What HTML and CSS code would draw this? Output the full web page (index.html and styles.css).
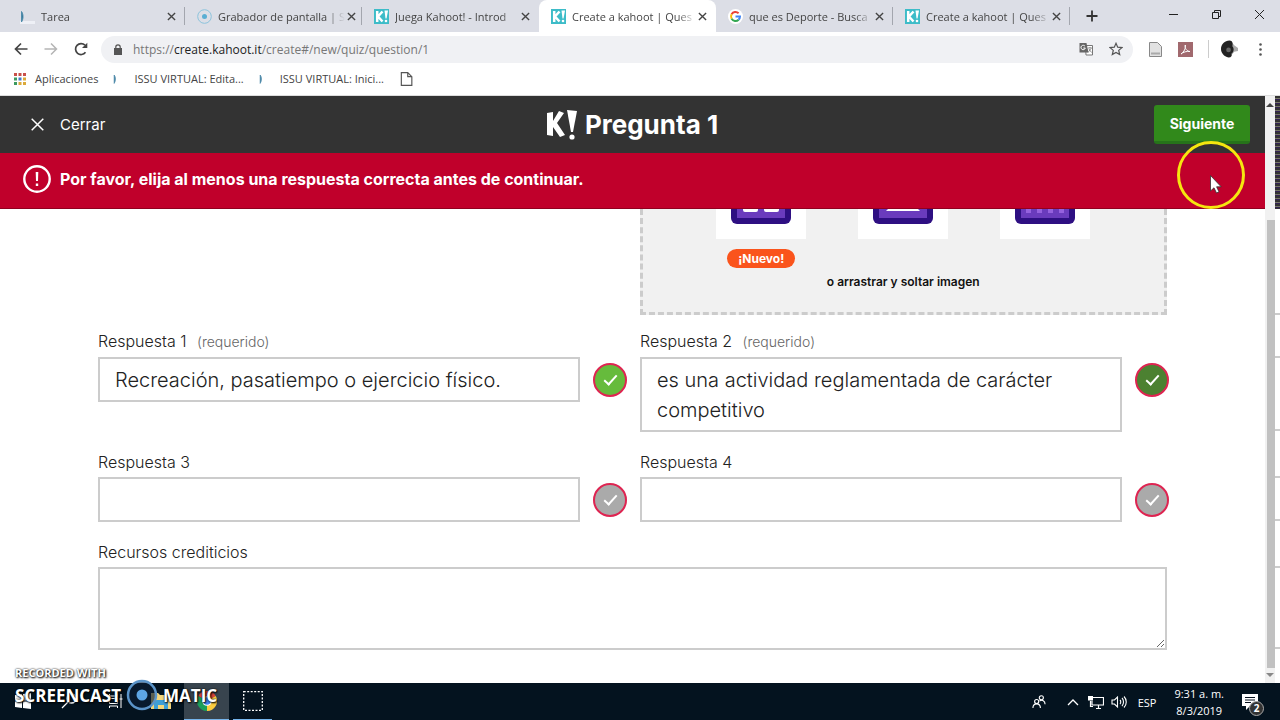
FILE: index.html
```html
<!DOCTYPE html>
<html lang="es">
<head>
<meta charset="UTF-8" />
<meta name="viewport" content="width=device-width, initial-scale=1" />
<title>Create a kahoot | Question</title>
<link rel="stylesheet" href="styles.css">
</head>
<body>

<!-- shared icons -->
<svg class="sprite" aria-hidden="true">
  <symbol id="x" viewBox="0 0 10 10"><path d="M1 1l8 8M9 1l-8 8" fill="none" stroke="currentColor" stroke-width="1.5"/></symbol>
  <symbol id="kahoot" viewBox="0 0 15 15"><path fill="#3dbcc8" d="M0 0h15v15H0z"/><path d="M3.200 2v11M8.500 2.500l-4.500 5 4.500 5" fill="none" stroke="#fff" stroke-width="2.500"/><path d="M10.500 1.500h3.500l-1.500 8h-1z" fill="#fff"/><circle cx="12" cy="12" r="1.300" fill="#fff"/></symbol>
  <symbol id="issu" viewBox="0 0 15 15"><path d="M1.500 2.500c2 2.500 2 7.500 0 10.500z" fill="#2c6f92" stroke="#4f8cab"/></symbol>
</svg>

<nav class="tabs">
  <div class="tab">
    <svg class="favicon"><use href="#issu"/></svg>
    <span class="tab-title">Tarea</span>
    <button class="tab-close" aria-label="Cerrar pestaña"><svg><use href="#x"/></svg></button>
  </div>
  <div class="tab">
    <svg class="favicon" viewBox="0 0 15 15"><circle cx="7.500" cy="7.500" r="6.800" fill="none" stroke="#8cc3dc"/><circle cx="7.500" cy="7.500" r="2.500" fill="#5aaed3"/></svg>
    <span class="tab-title">Grabador de pantalla | S</span>
    <button class="tab-close" aria-label="Cerrar pestaña"><svg><use href="#x"/></svg></button>
  </div>
  <div class="tab before-active">
    <svg class="favicon"><use href="#kahoot"/></svg>
    <span class="tab-title">Juega Kahoot! - Introd</span>
    <button class="tab-close" aria-label="Cerrar pestaña"><svg><use href="#x"/></svg></button>
  </div>
  <div class="tab active">
    <svg class="favicon"><use href="#kahoot"/></svg>
    <span class="tab-title">Create a kahoot | Ques</span>
    <button class="tab-close" aria-label="Cerrar pestaña"><svg><use href="#x"/></svg></button>
  </div>
  <div class="tab">
    <svg class="favicon" viewBox="0 0 15 15"><circle cx="7.500" cy="7.500" r="7.500" fill="#fff"/><g fill="none" stroke-width="2"><path d="M10.600 4.300A4.500 4.500 0 0 0 3.600 5.300" stroke="#ea4335"/><path d="M3.600 5.300a4.500 4.500 0 0 0 0 4.400" stroke="#fbbc05"/><path d="M3.600 9.700a4.500 4.500 0 0 0 7 1" stroke="#34a853"/><path d="M10.600 10.700A4.500 4.500 0 0 0 12 7.500H7.500" stroke="#4285f4"/></g></svg>
    <span class="tab-title">que es Deporte - Busca</span>
    <button class="tab-close" aria-label="Cerrar pestaña"><svg><use href="#x"/></svg></button>
  </div>
  <div class="tab">
    <svg class="favicon"><use href="#kahoot"/></svg>
    <span class="tab-title">Create a kahoot | Ques</span>
    <button class="tab-close" aria-label="Cerrar pestaña"><svg><use href="#x"/></svg></button>
  </div>
  <button class="new-tab" aria-label="Nueva pestaña"><svg viewBox="0 0 12 12"><path d="M6 .5v11M.5 6h11" stroke="#333" stroke-width="1.800"/></svg></button>
  <div class="window-buttons">
    <button aria-label="Minimizar"><svg viewBox="0 0 11 11"><path d="M1 5.500h9" stroke="#222"/></svg></button>
    <button aria-label="Restaurar"><svg viewBox="0 0 11 11"><path d="M1.500 3.500h6v6h-6zM3.500 3.500v-2h6v6h-2" fill="none" stroke="#222"/></svg></button>
    <button aria-label="Cerrar ventana"><svg viewBox="0 0 11 11"><path d="M1 1l9 9M10 1l-9 9" stroke="#222"/></svg></button>
  </div>
</nav>

<div class="toolbar">
  <button class="nav-btn" aria-label="Atrás"><svg viewBox="0 0 14 14"><path d="M13.500 7H1.500M7 1.500L1.500 7 7 12.500" fill="none" stroke="#444" stroke-width="1.700"/></svg></button>
  <button class="nav-btn" aria-label="Adelante"><svg viewBox="0 0 14 14"><path d="M.5 7h12M7 1.500L12.500 7 7 12.500" fill="none" stroke="#b5b5b5" stroke-width="1.500"/></svg></button>
  <button class="nav-btn" aria-label="Recargar"><svg viewBox="0 0 14 14"><path d="M11.500 10.300A5.500 5.500 0 1 1 11 3.200" fill="none" stroke="#444" stroke-width="1.700"/><path d="M13.300.7v5.300H8z" fill="#444"/></svg></button>
  <div class="address">
    <svg class="lock" viewBox="0 0 8 11"><path d="M0 4h8v7H0z" fill="#555"/><path d="M1.800 4.500V3a2.200 2.200 0 0 1 4.400 0v1.500" fill="none" stroke="#555" stroke-width="1.200"/></svg>
    <span class="url">https://<b>create.kahoot.it</b>/create#/new/quiz/question/1</span>
    <button aria-label="Traducir"><svg viewBox="0 0 14 14"><path d="M6.500 3.500h7v9.500H7z" fill="#fff" stroke="#777"/><path d="M.5 1h7l2 9.500h-9z" fill="#666"/><path d="M6 4.300a2.200 2.200 0 1 0 .3 1.700H4.300" fill="none" stroke="#fff"/><path d="M9 6h4M11 5v1M12 6.500l-3 4M10 7l2.500 3.500" stroke="#777" stroke-width=".8"/></svg></button>
    <button aria-label="Favorito"><svg viewBox="0 0 14 14"><path d="M7 1.300l1.700 3.900 4.200.4-3.200 2.800 1 4.200L7 10.400l-3.700 2.200 1-4.200L1.100 5.600l4.200-.4z" fill="none" stroke="#555" stroke-width="1.200"/></svg></button>
  </div>
  <div class="extensions">
    <svg viewBox="0 0 15 15"><path d="M1.500.5h8l4 4v10h-12z" fill="#e2e2e2" stroke="#888"/><path d="M3 10.500h9v2H3z" fill="#aaa"/></svg>
    <svg viewBox="0 0 15 15"><path fill="#a1696e" d="M0 0h15v15H0z"/><path d="M3 12c3-2 5-6 4.300-9C6.300 6 9 9.500 12 9.500 9 9 5 10 3 12z" fill="none" stroke="#fff"/></svg>
    <svg class="avatar" viewBox="0 0 18 18"><path d="M10 0l4 5 4 3v3l-4 1-4 5z" fill="#aaa"/><path d="M9 0C4 0 0 4 0 9c0 4 3 8 8 9 3 0 4-2 3-4 3-2 3-6 1-8 1-3 0-6-3-6z" fill="#222"/><circle cx="8" cy="10" r="2.500" fill="#666"/></svg>
    <svg viewBox="0 0 15 15"><g fill="#555"><circle cx="7.500" cy="2.500" r="1.300"/><circle cx="7.500" cy="7.500" r="1.300"/><circle cx="7.500" cy="12.500" r="1.300"/></g></svg>
  </div>
</div>

<div class="bookmarks">
  <a href="#" class="bookmark">
    <svg viewBox="0 0 12 12"><path d="M0 0h3v3H0zM4.500 0h3v3h-3zM9 0h3v3H9z" fill="#c9504a"/><path d="M0 4.500h3v3H0z" fill="#3c9a5f"/><path d="M4.500 4.500h3v3h-3z" fill="#4479c4"/><path d="M9 4.500h3v3H9zM4.500 9h3v3h-3zM9 9h3v3H9z" fill="#dba93a"/><path d="M0 9h3v3H0z" fill="#3c9a5f"/></svg>
    <span>Aplicaciones</span>
  </a>
  <a href="#" class="bookmark">
    <svg><use href="#issu"/></svg>
    <span>ISSU VIRTUAL: Edita...</span>
  </a>
  <a href="#" class="bookmark">
    <svg><use href="#issu"/></svg>
    <span>ISSU VIRTUAL: Inici...</span>
  </a>
  <a href="#" class="bookmark" aria-label="Página">
    <svg viewBox="0 0 12 12"><path d="M2 .5h5.500L11 4v7.500H2zM7.500.5V4H11" fill="none" stroke="#555"/></svg>
  </a>
</div>

<div class="viewport">
  <main class="app">
    <header class="app-header">
      <button class="close-btn"><svg viewBox="0 0 13 13"><path d="M.7.7l11.600 11.600M12.300.7L.7 12.300" stroke="#fff" stroke-width="1.500"/></svg>Cerrar</button>
      <h1>
        <svg viewBox="0 0 30 30"><path d="M0 3l6-1v9l6-10 5 2-7 10 8 12-5 2-7-10v9l-6-1z" fill="#fff"/><path d="M20 0l10 1-4 21h-2z" fill="#fff"/><circle cx="25" cy="27" r="2.600" fill="#fff"/></svg>
        Pregunta 1
      </h1>
      <button class="next-btn">Siguiente</button>
    </header>

    <div class="alert" role="alert">
      <svg viewBox="0 0 28 28"><circle cx="14" cy="14" r="12.700" fill="none" stroke="#fff" stroke-width="2.400"/><path d="M12.700 7h2.600l-.3 9h-2zM12.800 18.500h2.400V21h-2.400z" fill="#fff"/></svg>
      Por favor, elija al menos una respuesta correcta antes de continuar.
    </div>

    <form class="question">
      <section class="media">
        <div class="media-options">
          <div class="media-card"><svg viewBox="0 0 60 15"><path d="M0 0h60v9a6 6 0 0 1-6 6H6a6 6 0 0 1-6-6z" fill="#2e0f82"/><path d="M6 0h48v9H6z" fill="#6a3bbd"/><path d="M12 0h15v1a2 2 0 0 1-2 2H14a2 2 0 0 1-2-2zM33 0h15v1a2 2 0 0 1-2 2H35a2 2 0 0 1-2-2z" fill="#fff"/></svg></div>
          <div class="media-card"><svg viewBox="0 0 60 15"><path d="M0 0h60v9a6 6 0 0 1-6 6H6a6 6 0 0 1-6-6z" fill="#2e0f82"/><path d="M6 0h48v9H6z" fill="#6a3bbd"/><path d="M15 0h30l2 2H13z" fill="#fff"/></svg></div>
          <div class="media-card"><svg viewBox="0 0 60 15"><path d="M0 0h60v9a6 6 0 0 1-6 6H6a6 6 0 0 1-6-6z" fill="#2e0f82"/><path d="M6 0h48v9H6z" fill="#6a3bbd"/><path d="M11 0h5v4h-5zM22 0h5v4h-5zM33 0h5v4h-5zM44 0h5v4h-5z" fill="#9561de"/></svg></div>
        </div>
        <div class="media-badges"><span class="badge">¡Nuevo!</span></div>
        <p>o arrastrar y soltar imagen</p>
      </section>

      <div class="answers">
        <div class="answer">
          <label for="answer1">Respuesta 1 <small>(requerido)</small></label>
          <div class="answer-row">
            <textarea id="answer1" rows="1">Recreación, pasatiempo o ejercicio físico.</textarea>
            <input type="checkbox" class="correct light" checked aria-label="Respuesta 1 correcta">
          </div>
        </div>
        <div class="answer">
          <label for="answer2">Respuesta 2 <small>(requerido)</small></label>
          <div class="answer-row">
            <textarea id="answer2" rows="2">es una actividad reglamentada de carácter competitivo</textarea>
            <input type="checkbox" class="correct" checked aria-label="Respuesta 2 correcta">
          </div>
        </div>
        <div class="answer">
          <label for="answer3">Respuesta 3</label>
          <div class="answer-row">
            <textarea id="answer3" rows="1"></textarea>
            <input type="checkbox" class="correct" aria-label="Respuesta 3 correcta">
          </div>
        </div>
        <div class="answer">
          <label for="answer4">Respuesta 4</label>
          <div class="answer-row">
            <textarea id="answer4" rows="1"></textarea>
            <input type="checkbox" class="correct" aria-label="Respuesta 4 correcta">
          </div>
        </div>
      </div>

      <div class="credits">
        <label for="credits">Recursos crediticios</label>
        <textarea id="credits"></textarea>
      </div>
    </form>
  </main>

  <div class="scrollbar" aria-hidden="true">
    <svg viewBox="0 0 10 5"><path d="M5 0l4 4H1z" fill="#444"/></svg>
    <div class="thumb"></div>
    <svg viewBox="0 0 10 5"><path d="M5 5L1 1h8z" fill="#888"/></svg>
  </div>
  <div class="edge" aria-hidden="true">
    <div class="edge-noise"></div>
    <div class="edge-media"></div>
    <div class="edge-field tall"></div>
    <div class="edge-field"></div>
    <div class="edge-field credit"></div>
  </div>

  <div class="pointer">
    <svg viewBox="0 0 68 68"><circle cx="34" cy="34" r="32.500" fill="none" stroke="#f5e60f" stroke-width="3"/><path d="M33.500 34.500v15.500l3.500-3.200 2.500 5.200 2.500-1.200-2.400-5h4.600z" fill="#fff" stroke="#333" stroke-width=".8"/></svg>
  </div>
</div>

<footer class="taskbar">
  <div class="task-items">
    <button class="task" aria-label="Inicio"><svg viewBox="0 0 16 16"><path d="M0 2l7-1v6.500H0zM8 .9L16 0v7.500H8zM0 8.500h7V15l-7-1zM8 8.500h8V16l-8-1z" fill="#fff"/></svg></button>
    <button class="task" aria-label="Buscar"><svg viewBox="0 0 16 16"><circle cx="10.500" cy="5.500" r="4.500" fill="none" stroke="#fff" stroke-width="1.300"/><path d="M7 9l-6 6" stroke="#fff" stroke-width="1.300"/></svg></button>
    <button class="task" aria-label="Vista de tareas"><svg viewBox="0 0 16 16"><path d="M2.500 5.500h8v5h-8zM2.500 1v2h8V1M2.500 15v-2h8v2M14 1v14M12.500 6h3" fill="none" stroke="#fff"/></svg></button>
    <button class="task" aria-label="Explorador"><svg class="big" viewBox="0 0 20 20"><path d="M0 2h7l2 2h11v14H0z" fill="#f3d67c"/><path d="M3 18v-6a3 3 0 0 1 3-3h8a3 3 0 0 1 3 3v6h-4v-4H7v4z" fill="#3f9fd6"/></svg></button>
    <button class="task open current" aria-label="Chrome"><svg class="big" viewBox="0 0 20 20"><path d="M10 10L1.300 5A10 10 0 0 1 18.700 5z" fill="#dc4437"/><path d="M10 10L18.700 5A10 10 0 0 1 10 20z" fill="#fccd3f"/><path d="M10 10v10A10 10 0 0 1 1.300 5z" fill="#1c9f5a"/><circle cx="10" cy="10" r="4.800" fill="#fff"/><circle cx="10" cy="10" r="3.700" fill="#4285f4"/></svg></button>
    <button class="task open" aria-label="Grabador"><svg class="big" viewBox="0 0 20 20"><path d="M.7.7h18.600v18.600H.7z" fill="none" stroke="#fff" stroke-width="1.300" stroke-dasharray="2 1.500"/></svg></button>
  </div>
  <div class="tray">
    <svg class="people" viewBox="0 0 15 15"><g fill="none" stroke="#fff" stroke-width="1.200"><circle cx="10" cy="3" r="2.200"/><circle cx="5" cy="7" r="2.200"/><path d="M1 14c0-6 8-6 8 0M8 6.500c3-2 6 0 6 3.500"/></g></svg>
    <svg class="chevron" viewBox="0 0 12 12"><path d="M1 9l5-5 5 5" fill="none" stroke="#fff" stroke-width="1.300"/></svg>
    <svg viewBox="0 0 16 14"><path d="M5 2.500h10.500v7.500H4V6M8 13.500h5M10.500 10v3M2.500 6v5.500H5" fill="none" stroke="#fff" stroke-width="1.200"/><path d="M0 1h5v4.500H0z" fill="#fff"/></svg>
    <svg viewBox="0 0 16 14"><path d="M1 5h2.500l3-3v10l-3-3H1zM9 5c1 1 1 3 0 4M11 3c2 2 2 6 0 8M13 1.500c3 3 3 8 0 11" fill="none" stroke="#fff" stroke-width="1.100"/></svg>
    <span class="lang">ESP</span>
    <time class="clock" datetime="2019-03-08T09:31">9:31 a. m.<br>8/3/2019</time>
    <button class="notifications" aria-label="Notificaciones">
      <svg viewBox="0 0 16 16"><path d="M0 0h16v12H8l-4 4v-4H0z" fill="#fff"/><path d="M3 3.500h10M3 6h10M3 8.500h6" stroke="#06101d"/></svg>
      <span class="count">2</span>
    </button>
  </div>

  <div class="watermark">
    <div class="recorded">RECORDED WITH</div>
    <div class="brand">SCREENCAST<svg viewBox="0 0 32 32"><circle cx="16" cy="16" r="14" fill="#0b1f38" fill-opacity=".65" stroke="#5b94c9" stroke-width="2.500"/><circle cx="16" cy="16" r="5.500" fill="#5da5e4"/></svg>MATIC</div>
  </div>
</footer>

</body>
</html>
```
FILE: styles.css
```css
* {
  box-sizing: border-box;
}
body {
  margin: 0;
  min-height: 100vh;
  display: flex;
  flex-direction: column;
  font-family: "Open Sans", "Noto Sans", sans-serif;
  font-size: 11px;
  color: #444;
  background: #fff;
}
button {
  border: 0;
  padding: 0;
  background: none;
  color: inherit;
  font: inherit;
}
svg {
  display: block;
  flex: none;
}
.sprite {
  display: none;
}

/* browser tabs */
.tabs {
  display: flex;
  align-items: stretch;
  height: 32px;
  padding-left: 8px;
  background: #dcdee6;
}
.tab {
  flex: 0 1 177px;
  min-width: 0;
  display: flex;
  align-items: center;
  padding: 0 9px 0 12px;
  position: relative;
}
.tab::after {
  content: "";
  position: absolute;
  right: 0;
  top: 7px;
  height: 18px;
  border-right: 1px solid #a3a6ae;
}
.tab.active {
  background: #fff;
  border-radius: 8px 8px 0 0;
}
.tab.active::after,
.before-active::after {
  display: none;
}
.favicon {
  width: 15px;
  height: 15px;
}
.tab-title {
  flex: 1;
  margin-left: 6px;
  white-space: nowrap;
  mask-image: linear-gradient(to right, #000 85%, transparent);
}
.tab:first-child .favicon {
  background: linear-gradient(to top, #eef0f6 3px, transparent 3px);
}
.tab-close {
  margin-left: 2px;
}
.tab-close svg {
  width: 9px;
  height: 9px;
}
.new-tab {
  margin-left: 16px;
}
.new-tab svg {
  width: 12px;
  height: 12px;
}
.window-buttons {
  display: flex;
  gap: 32px;
  margin-left: auto;
  padding: 0 15px 4px 0;
}
.window-buttons svg {
  width: 11px;
  height: 11px;
}

/* address bar */
.toolbar {
  display: flex;
  align-items: center;
  height: 34px;
  padding: 0 12px 0 14px;
}
.nav-btn {
  margin-right: 16px;
}
.nav-btn svg {
  width: 14px;
  height: 14px;
}
.address {
  flex: 1;
  display: flex;
  align-items: center;
  height: 27px;
  margin-left: -3px;
  padding: 0 10px 0 13px;
  border-radius: 14px;
  background: #f0f1f4;
}
.lock {
  width: 8px;
  height: 11px;
}
.url {
  flex: 1;
  margin-left: 11px;
  font-size: 12px;
  color: #777;
}
.url b {
  font-weight: 400;
  color: #222;
}
.address button {
  margin-left: 16px;
}
.address button svg {
  width: 14px;
  height: 14px;
}
.extensions {
  display: flex;
  align-items: center;
  gap: 15px;
  margin-left: 15px;
}
.extensions svg {
  width: 15px;
  height: 15px;
}
.extensions .avatar {
  width: 30px;
  height: 18px;
  padding-left: 12px;
  border-left: 1px solid #ccc;
}

/* bookmarks */
.bookmarks {
  display: flex;
  align-items: center;
  height: 30px;
  padding: 0 14px 4px;
  border-bottom: 1px solid #ddd;
}
.bookmark {
  display: flex;
  align-items: center;
  gap: 9px;
  margin-right: 15px;
  color: #444;
  text-decoration: none;
}
.bookmark svg {
  width: 12px;
  height: 12px;
}
.bookmark:last-child svg {
  width: 14px;
  height: 14px;
}

/* page area */
.viewport {
  flex: 1;
  display: flex;
  position: relative;
}
.app {
  flex: 1;
  min-width: 0;
  font-family: Inter, "Open Sans", sans-serif;
  color: #333;
}
.app-header {
  display: grid;
  grid-template-columns: 1fr auto 1fr;
  align-items: center;
  height: 57px;
  padding: 0 15px;
  background: #333;
  color: #fff;
}
.close-btn {
  display: flex;
  align-items: center;
  gap: 16px;
  justify-self: start;
  padding-left: 16px;
  font-size: 15px;
}
.close-btn svg {
  width: 13px;
  height: 13px;
}
.app-header h1 {
  display: flex;
  align-items: center;
  gap: 8px;
  margin: 0;
  font-size: 26px;
  font-weight: 700;
}
.app-header h1 svg {
  width: 30px;
  height: 30px;
}
.next-btn {
  justify-self: end;
  width: 96px;
  height: 39px;
  border-bottom: 3px solid #26731a;
  border-radius: 3px;
  background: #31891b;
  font-size: 14px;
  font-weight: 700;
}
.alert {
  display: flex;
  align-items: center;
  gap: 9px;
  height: 56px;
  padding: 0 23px 4px;
  background: #c0002b;
  border-bottom: 1px solid #90001f;
  color: #fff;
  font-size: 16px;
  font-weight: 700;
}
.alert svg {
  width: 28px;
  height: 28px;
}

/* question form */
.question {
  padding: 0 96px 33px 98px;
}
.media {
  width: calc(50% - 8px);
  height: 106px;
  margin: 0 2px 11px auto;
  border: 3px dashed #ccc;
  border-top: 0;
  background: #f1f1f1;
  color: #111;
}
.media-options,
.media-badges {
  display: grid;
  grid-template-columns: repeat(3, 90px);
  justify-content: center;
  gap: 52px;
}
.media-card {
  height: 30px;
  background: #fff;
}
.media-card svg {
  width: 60px;
  height: 15px;
  margin: 0 auto;
}
.media-badges {
  padding-top: 10px;
}
.badge {
  justify-self: center;
  padding: 0 11px;
  border-radius: 10px;
  background: #fa541c;
  color: #fff;
  font-size: 12px;
  font-weight: 700;
  line-height: 19px;
}
.media p {
  margin: 4px 0 0;
  text-align: center;
  font-size: 12px;
  font-weight: 600;
  line-height: 20px;
}
.answers {
  display: grid;
  grid-template-columns: 1fr 1fr;
  gap: 15px 13px;
  margin-bottom: 15px;
}
.credits {
  margin-right: 2px;
}
.question label {
  display: block;
  font-size: 16px;
  font-weight: 300;
  line-height: 30px;
  color: #222;
}
.question small {
  margin-left: 6px;
  font-size: 14px;
  color: #666;
}
.answer-row {
  display: flex;
  align-items: flex-start;
  gap: 13px;
}
textarea {
  display: block;
  width: 100%;
  height: 83px;
  margin: 0;
  padding: 6px 15px 5px;
  border: 2px solid #ccc;
  border-radius: 0;
  background: #fff;
  color: #222;
  font: 300 20px/30px Inter, "Open Sans", sans-serif;
}
.answer-row textarea {
  flex: 1;
  height: auto;
  min-width: 0;
  resize: none;
  overflow: hidden;
}
.correct {
  appearance: none;
  flex: none;
  display: grid;
  place-items: center;
  width: 34px;
  height: 34px;
  margin: 6px 0 0;
  border: 2px solid #de2451;
  border-radius: 50%;
  background: #aaa;
}
.correct:checked {
  background: #4c8131;
}
.correct.light:checked {
  background: #66bb3c;
}
.correct::before {
  content: "";
  width: 5px;
  height: 11px;
  margin-bottom: 4px;
  border: solid #fff;
  border-width: 0 2px 2px 0;
  transform: rotate(42deg);
}

/* scrollbar and the strip at the window's edge */
.scrollbar {
  display: flex;
  flex-direction: column;
  width: 10px;
  padding: 7px 0 6px;
  background: #f1f1f1;
}
.scrollbar svg {
  width: 10px;
  height: 5px;
}
.thumb {
  flex: 1;
  margin: 112px 0 4px 2px;
  background: #c1c1c1;
}
.edge {
  width: 5px;
  background: #fff;
}
.edge-noise {
  height: 113px;
  background: repeating-linear-gradient(#333 0 2px, #776 2px 3px, #325 3px 4px);
}
.edge-media {
  height: 106px;
  margin-bottom: 41px;
  border-bottom: 2px solid #ccc;
}
.edge-field {
  height: 45px;
  margin-bottom: 45px;
  border: solid #ccc;
  border-width: 2px 0;
}
.edge-field.tall {
  height: 75px;
}
.edge-field.credit {
  height: 83px;
  margin-bottom: 0;
}
.pointer {
  position: absolute;
  top: 45px;
  right: 35px;
  width: 68px;
  pointer-events: none;
}

/* windows taskbar */
.taskbar {
  display: flex;
  justify-content: space-between;
  position: relative;
  height: 38px;
  background: #04131f;
  color: #fff;
}
.task-items {
  display: flex;
}
.task {
  display: grid;
  place-items: center;
  width: 45px;
  margin-right: 1px;
  border-bottom: 2px solid transparent;
}
.task svg {
  width: 16px;
  height: 16px;
}
.task .big {
  width: 20px;
  height: 20px;
}
.task.open {
  border-bottom-color: #76b5ec;
}
.task.current {
  background: #38444e;
}
.task.open + .task.open {
  width: 39px;
  margin-left: 3px;
}
.tray {
  display: flex;
  align-items: center;
  padding-right: 22px;
}
.tray svg {
  width: 16px;
  height: 14px;
  margin-right: 7px;
}
.tray .people {
  margin-right: 20px;
}
.tray .chevron {
  width: 12px;
  margin-right: 9px;
}
.lang {
  margin: 0 18px 0 4px;
}
.clock {
  text-align: center;
  line-height: 17px;
}
.notifications {
  position: relative;
  margin-left: 18px;
}
.notifications svg {
  height: 16px;
  margin: 0;
}
.count {
  position: absolute;
  left: 7px;
  top: 7px;
  width: 15px;
  height: 15px;
  border: 1px solid #aaa;
  border-radius: 50%;
  background: #333;
  font-size: 10px;
  font-weight: 700;
  line-height: 13px;
}

/* recorder watermark, over page and taskbar */
.watermark {
  position: absolute;
  left: 15px;
  bottom: 10px;
  font-family: "Open Sans", sans-serif;
  font-weight: 700;
  text-shadow: 1px 1px 2px #000, 0 0 2px #000;
  pointer-events: none;
}
.recorded {
  font-size: 11px;
  line-height: 12px;
}
.brand {
  display: flex;
  align-items: center;
  gap: 5px;
  font-size: 17px;
}
.brand svg {
  width: 32px;
  height: 32px;
}
```
